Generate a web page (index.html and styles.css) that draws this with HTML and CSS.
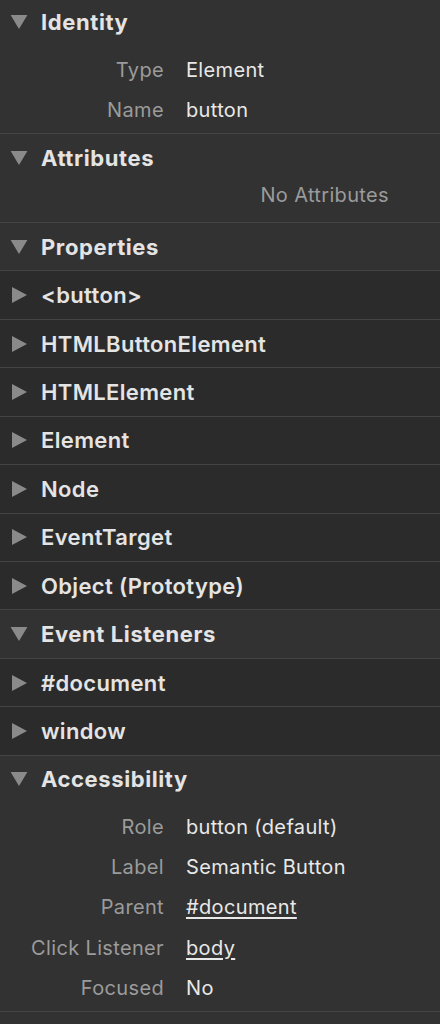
FILE: index.html
```html
<!DOCTYPE html>
<html>
<head>
<meta charset="utf-8">
<link rel="stylesheet" href="styles.css">
</head>
<body>
<div class="panel">
  <section class="group first">
    <div class="head"><svg class="tri-down" viewBox="0 0 18 15"><path d="M0 0H18L9 15Z"/></svg><span class="title">Identity</span></div>
    <div class="kv-list">
      <div class="kv"><span class="key">Type</span><span class="val">Element</span></div>
      <div class="kv"><span class="key">Name</span><span class="val">button</span></div>
    </div>
  </section>
  <section class="group">
    <div class="head"><svg class="tri-down" viewBox="0 0 18 15"><path d="M0 0H18L9 15Z"/></svg><span class="title">Attributes</span></div>
    <div class="empty">No Attributes</div>
  </section>
  <section class="group">
    <div class="head"><svg class="tri-down" viewBox="0 0 18 15"><path d="M0 0H18L9 15Z"/></svg><span class="title">Properties</span></div>
    <div class="item"><svg class="tri-right" viewBox="0 0 15 16"><path d="M0 0L15 8L0 16Z"/></svg><span class="label">&lt;button&gt;</span></div>
    <div class="item"><svg class="tri-right" viewBox="0 0 15 16"><path d="M0 0L15 8L0 16Z"/></svg><span class="label">HTMLButtonElement</span></div>
    <div class="item"><svg class="tri-right" viewBox="0 0 15 16"><path d="M0 0L15 8L0 16Z"/></svg><span class="label">HTMLElement</span></div>
    <div class="item"><svg class="tri-right" viewBox="0 0 15 16"><path d="M0 0L15 8L0 16Z"/></svg><span class="label">Element</span></div>
    <div class="item"><svg class="tri-right" viewBox="0 0 15 16"><path d="M0 0L15 8L0 16Z"/></svg><span class="label">Node</span></div>
    <div class="item"><svg class="tri-right" viewBox="0 0 15 16"><path d="M0 0L15 8L0 16Z"/></svg><span class="label">EventTarget</span></div>
    <div class="item"><svg class="tri-right" viewBox="0 0 15 16"><path d="M0 0L15 8L0 16Z"/></svg><span class="label">Object (Prototype)</span></div>
  </section>
  <section class="group">
    <div class="head"><svg class="tri-down" viewBox="0 0 18 15"><path d="M0 0H18L9 15Z"/></svg><span class="title">Event Listeners</span></div>
    <div class="item"><svg class="tri-right" viewBox="0 0 15 16"><path d="M0 0L15 8L0 16Z"/></svg><span class="label">#document</span></div>
    <div class="item"><svg class="tri-right" viewBox="0 0 15 16"><path d="M0 0L15 8L0 16Z"/></svg><span class="label">window</span></div>
  </section>
  <section class="group">
    <div class="head"><svg class="tri-down" viewBox="0 0 18 15"><path d="M0 0H18L9 15Z"/></svg><span class="title">Accessibility</span></div>
    <div class="kv-list acc">
      <div class="kv"><span class="key">Role</span><span class="val">button (default)</span></div>
      <div class="kv"><span class="key">Label</span><span class="val">Semantic Button</span></div>
      <div class="kv"><span class="key">Parent</span><span class="val link">#document</span></div>
      <div class="kv"><span class="key">Click Listener</span><span class="val link">body</span></div>
      <div class="kv"><span class="key">Focused</span><span class="val">No</span></div>
    </div>
  </section>
</div>
</body>
</html>
```
FILE: styles.css
```css
html, body {
  margin: 0;
  padding: 0;
  background: #323232;
}
body {
  font-family: Inter, "Liberation Sans", sans-serif;
  color: #e6e6e6;
  width: 440px;
  height: 1024px;
  overflow: hidden;
}
.panel {
  display: flex;
  flex-direction: column;
}
.group {
  background: #323232;
  border-bottom: 1px solid #444444;
}
.head {
  height: 47.45px;
  display: flex;
  align-items: center;
}
.first .head {
  height: 44px;
}
.tri-down {
  width: 18px;
  height: 14px;
  margin-left: 10px;
  margin-right: 13px;
  fill: #8a8a8a;
}
.title {
  font-size: 22px;
  font-weight: 700;
  letter-spacing: 0.6px;
  color: #e4e4e4;
}
.kv-list {
  padding: 6px 0 3px;
  display: flex;
  flex-direction: column;
}
.kv-list.acc {
  padding: 3.5px 0 3.5px;
}
.kv {
  height: 40px;
  display: grid;
  grid-template-columns: 164px 1fr;
  column-gap: 22px;
  align-items: center;
  font-size: 20px;
  letter-spacing: 0.35px;
}
.acc .kv {
  height: 40.25px;
}
.key {
  text-align: right;
  color: #9b9b9b;
}
.val {
  color: #e8e8e8;
}
.val.link {
  text-decoration: underline;
  text-underline-offset: 3px;
  text-decoration-thickness: 1.5px;
}
.empty {
  height: 40.5px;
  box-sizing: border-box;
  padding-top: 1px;
  padding-right: 51px;
  text-align: right;
  font-size: 20px;
  letter-spacing: 0.35px;
  color: #9b9b9b;
  line-height: 26px;
}
.item {
  height: 47.45px;
  border-top: 1px solid #444444;
  background: #2b2b2b;
  display: flex;
  align-items: center;
}
.tri-right {
  width: 15px;
  height: 16px;
  margin-left: 12px;
  margin-right: 14px;
  fill: #8a8a8a;
}
.label {
  font-size: 22px;
  font-weight: 600;
  letter-spacing: 0.35px;
  color: #e4e4e4;
}
```
